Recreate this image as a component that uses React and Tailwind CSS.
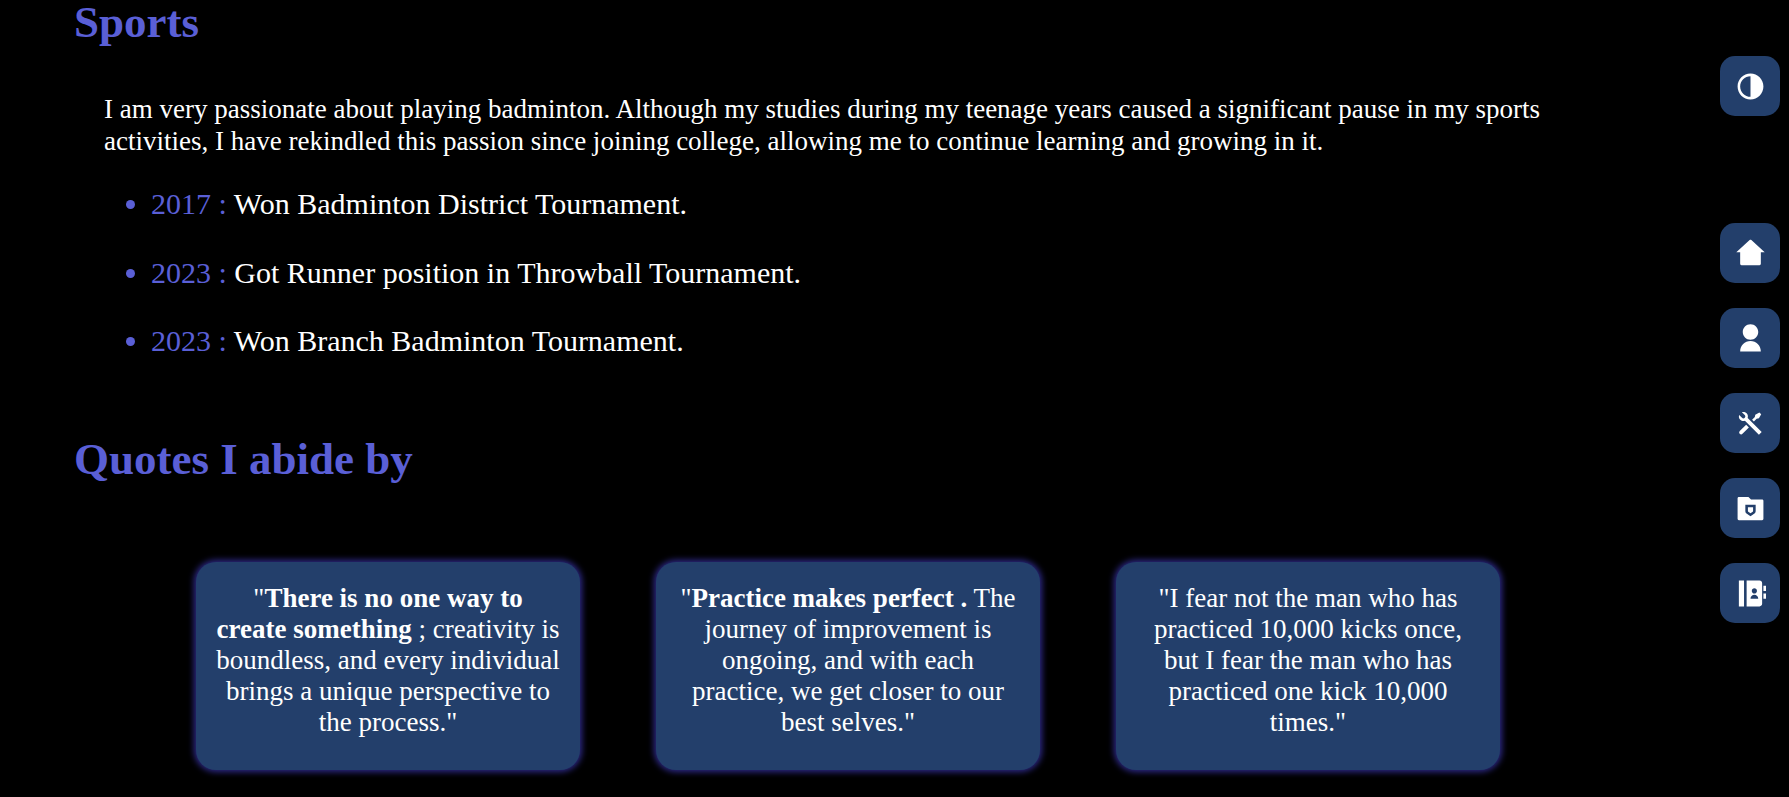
import React from "react";
import { RiContrastFill, RiHome2Fill, RiUserFill, RiToolsFill, RiFolderShieldFill, RiContactsBookFill } from "react-icons/ri";

const items = [
  ["2017 :", "Won Badminton District Tournament."],
  ["2023 :", "Got Runner position in Throwball Tournament."],
  ["2023 :", "Won Branch Badminton Tournament."],
];

function SideButton({ icon: Icon }) {
  return (
    <button className="flex h-[60px] w-[60px] items-center justify-center rounded-[15px] bg-[#233f6b] text-white">
      <Icon className="h-[31px] w-[31px]" />
    </button>
  );
}

function Quote({ children }) {
  return (
    <div className="h-[208px] w-[384px] rounded-[20px] bg-[#233f6b] px-[20px] pt-[21px] text-center text-[27px] leading-[31px] text-white shadow-[0_0_6px_2px_#2e2a8a]">
      {children}
    </div>
  );
}

export default function App() {
  return (
    <div className="flex h-[797px] w-full overflow-hidden bg-black font-['Liberation_Serif',serif] text-white">
      <main className="flex-1 pl-[74px]">
        <h2 className="text-[45px] leading-[44px] font-bold text-[#5a5fd6]">Sports</h2>
        <p className="mt-[49px] w-[1490px] pl-[30px] text-[27px] leading-[32px]">
          I am very passionate about playing badminton. Although my studies during my teenage years caused a significant pause in my sports activities, I have rekindled this passion since joining college, allowing me to continue learning and growing in it.
        </p>
        <ul className="mt-[30px] flex list-disc flex-col gap-[34.5px] pl-[77px] text-[30px] leading-[34px] marker:text-[#5a5fd6]">
          {items.map(([year, text]) => (
            <li key={text}>
              <span className="text-[#5a5fd6]">{year} </span>
              {text}
            </li>
          ))}
        </ul>
        <h2 className="mt-[75px] text-[45px] leading-[52px] font-bold text-[#5a5fd6]">Quotes I abide by</h2>
        <div className="mt-[77px] flex gap-[76px] pl-[122px]">
          <Quote>
            "<b>There is no one way to create something</b> ; creativity is boundless, and every individual brings a unique perspective to the process."
          </Quote>
          <Quote>
            "<b>Practice makes perfect .</b> The journey of improvement is ongoing, and with each practice, we get closer to our best selves."
          </Quote>
          <Quote>
            "I fear not the man who has practiced 10,000 kicks once, but I fear the man who has practiced one kick 10,000 times."
          </Quote>
        </div>
      </main>
      <aside className="flex w-[69px] flex-col pt-[56px]">
        <SideButton icon={RiContrastFill} />
        <div className="mt-[107px] flex flex-col gap-[25px]">
          <SideButton icon={RiHome2Fill} />
          <SideButton icon={RiUserFill} />
          <SideButton icon={RiToolsFill} />
          <SideButton icon={RiFolderShieldFill} />
          <SideButton icon={RiContactsBookFill} />
        </div>
      </aside>
    </div>
  );
}
